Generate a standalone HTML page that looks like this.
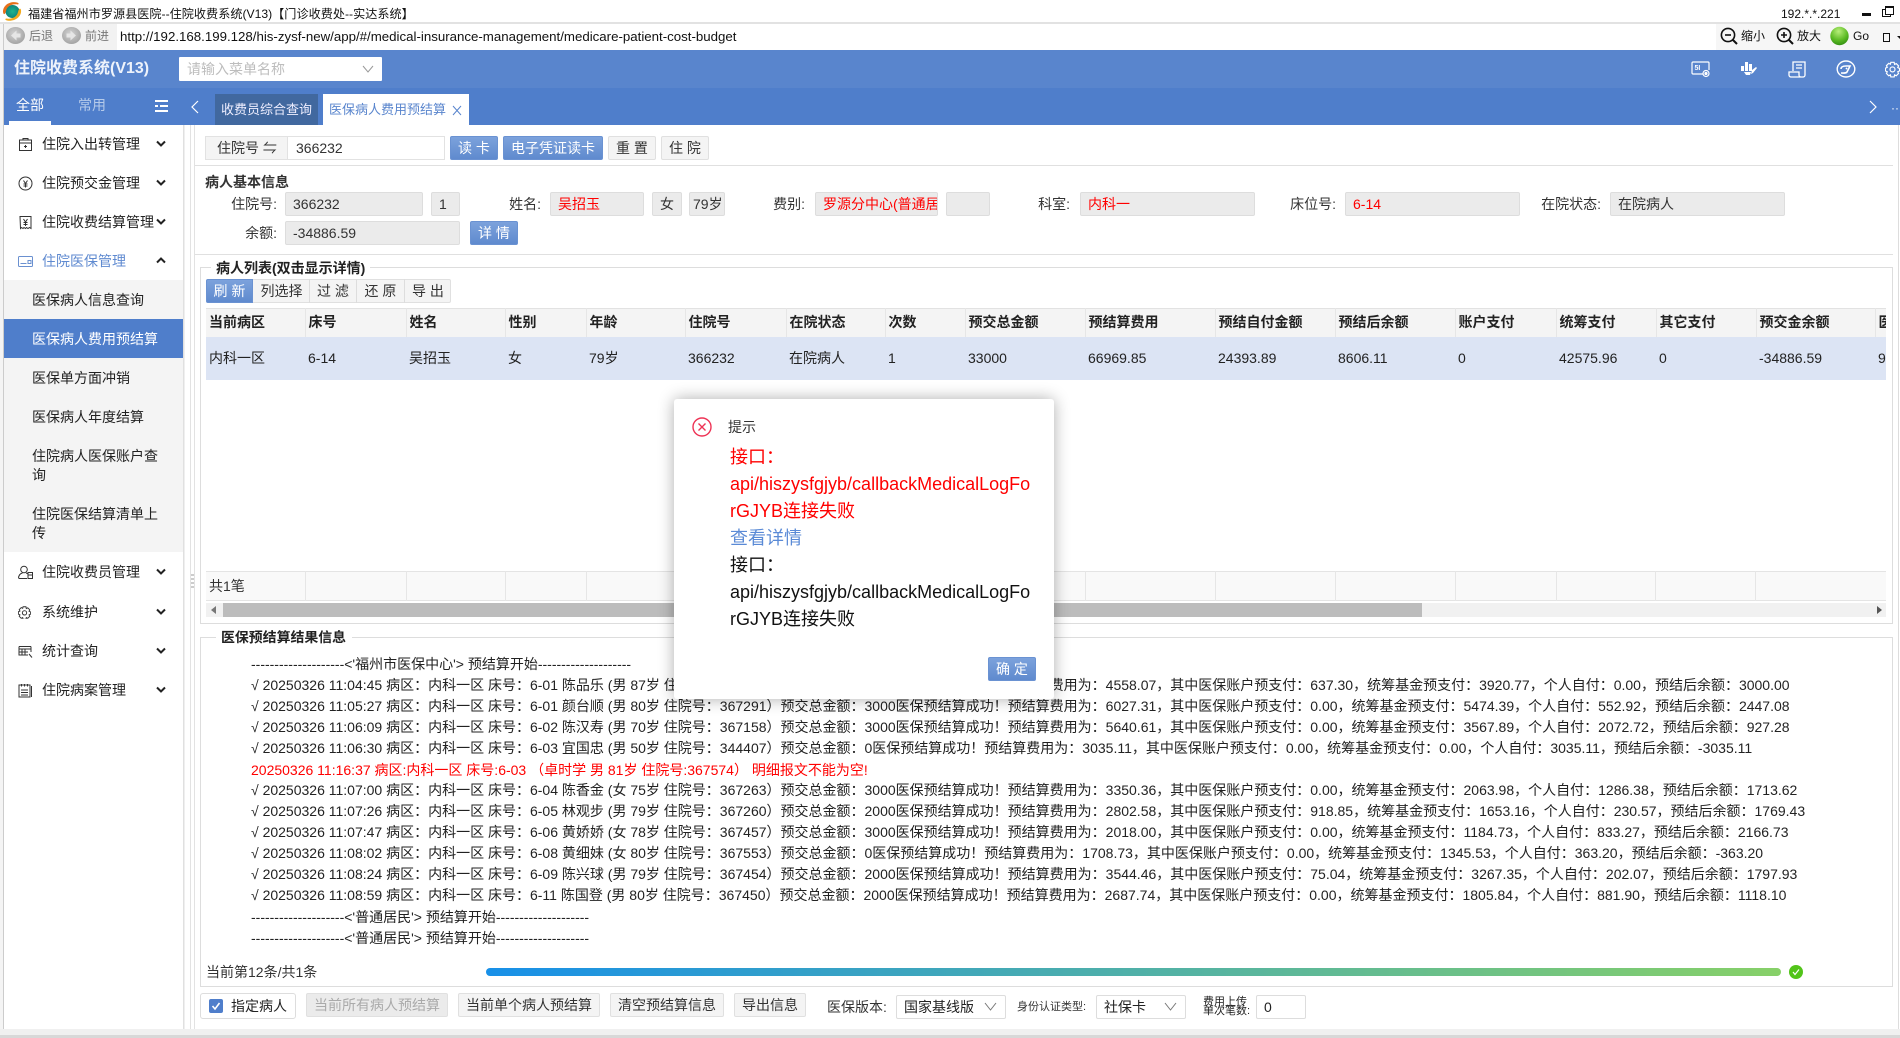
<!DOCTYPE html>
<html lang="zh-CN">
<head>
<meta charset="utf-8">
<title>住院收费系统</title>
<style>
html,body{margin:0;padding:0;width:1900px;height:1038px;overflow:hidden;background:#fff}
body{position:relative;font-family:"Liberation Sans","Noto Sans CJK SC",sans-serif;font-size:14px;color:#222}
.a{position:absolute;white-space:nowrap}
.t{position:absolute;white-space:nowrap;line-height:20px;height:20px}
.box{position:absolute;box-sizing:border-box;background:#ebebeb;border:1px solid #ddd;border-radius:2px;line-height:22px;padding-left:7px;white-space:nowrap;overflow:hidden;height:24px;color:#333}
.red{color:#f00}
.lbl{position:absolute;white-space:nowrap;line-height:24px;height:24px;text-align:right;color:#333}
.btn{position:absolute;box-sizing:border-box;height:24px;line-height:22px;text-align:center;border:1px solid #6a92d2;border-radius:2px;background:linear-gradient(#7ca2dc,#5f8ace);color:#fff;white-space:nowrap}
.wbtn{position:absolute;box-sizing:border-box;height:24px;line-height:22px;text-align:center;border:1px solid #e0e0e0;border-radius:2px;background:#f4f4f4;color:#333;white-space:nowrap}
.hl{position:absolute;height:1px;background:#ddd}
.vl{position:absolute;width:1px;background:#ddd}
.mi{position:absolute;left:4px;width:180px;height:39px}
.mi .tx{position:absolute;left:38px;top:9px;line-height:20px;white-space:nowrap}
.mi svg.ic{position:absolute;left:14px;top:12px}
.mi svg.ar{position:absolute;left:152px;top:15px}
.sub{position:absolute;left:32px;line-height:19px;white-space:nowrap;color:#222}
table{border-collapse:collapse;table-layout:fixed}
td,th{padding:0 0 0 3px;text-align:left;white-space:nowrap;overflow:hidden;font-size:14px;color:#222}
th{padding-bottom:2px}
.log{position:absolute;left:251px;white-space:pre;line-height:20px;height:20px;color:#222;font-size:14px}
</style>
</head>
<body>

<!-- title bar -->
<svg class="a" style="left:2px;top:1px" width="20" height="21" viewBox="0 0 20 21">
<defs><radialGradient id="lg" cx=".5" cy=".5" r=".6"><stop offset="0" stop-color="#1fb58f"/><stop offset="1" stop-color="#0c7a78"/></radialGradient></defs>
<ellipse cx="10.500" cy="10.500" rx="7" ry="6.500" fill="url(#lg)"/>
<path d="M1 11C1 4 8 0 15 1.500 17 2 17 3 16 3.500 10 2.500 5 5 4 10 3 14 1.500 14 1 11Z" fill="#e8701a"/>
<path d="M19 9C20 16 12 21 5 19.500 3 19 3 18 4 17.500 10 18.500 15 16 16 11 17 7 18.500 7 19 9Z" fill="#f2a91c"/>
</svg>
<div class="t" style="left:28px;top:4px;font-size:12.15px;color:#111">福建省福州市罗源县医院--住院收费系统(V13)【门诊收费处--实达系统】</div>
<div class="t" style="left:1781px;top:4px;font-size:12px;color:#111">192.*.*.221</div>
<div class="a" style="left:1862px;top:13px;width:9px;height:3px;background:#111"></div>
<div class="a" style="left:1882px;top:9px;width:7px;height:6px;border:1px solid #111;background:#fff"></div>
<div class="a" style="left:1885px;top:6px;width:7px;height:6px;border:1px solid #111;border-top-width:2px;background:#fff"></div>
<div class="hl" style="left:0;top:22px;width:1900px;background:#e2e2e2;height:2px"></div>

<!-- address bar -->
<div class="a" style="left:0;top:24px;width:3px;height:1014px;background:#f4f4f4"></div>
<div class="a" style="left:3px;top:24px;width:1px;height:1005px;background:#ccc"></div>
<div class="a" style="left:4px;top:24px;width:113px;height:26px;background:#f2f2f2"></div>
<svg class="a" style="left:6px;top:27px" width="19" height="17" viewBox="0 0 19 17">
<defs><radialGradient id="gb" cx=".45" cy=".4" r=".65"><stop offset="0" stop-color="#d4d4d4"/><stop offset="1" stop-color="#a0a0a0"/></radialGradient></defs>
<ellipse cx="9.500" cy="8.500" rx="9.500" ry="8.500" fill="url(#gb)"/><path d="M10.500 3.500 5 8.500l5.500 5v-3h4v-4h-4z" fill="#e6e6e6"/></svg>
<div class="t" style="left:29px;top:26px;font-size:12px;color:#777">后退</div>
<svg class="a" style="left:62px;top:27px" width="19" height="17" viewBox="0 0 19 17">
<ellipse cx="9.500" cy="8.500" rx="9.500" ry="8.500" fill="url(#gb)"/><path d="M8.500 3.500l5.500 5-5.500 5v-3h-4v-4h4z" fill="#e6e6e6"/></svg>
<div class="t" style="left:85px;top:26px;font-size:12px;color:#777">前进</div>
<div class="t" style="left:120px;top:27px;font-size:13.28px;color:#111">http://192.168.199.128/his-zysf-new/app/#/medical-insurance-management/medicare-patient-cost-budget</div>
<div class="a" style="left:1716px;top:24px;width:184px;height:26px;background:#f6f6f6"></div>
<svg class="a" style="left:1720px;top:27px" width="18" height="18" viewBox="0 0 18 18" fill="none" stroke="#111" stroke-width="1.6"><circle cx="8" cy="8" r="6.6"/><path d="M5 8h6"/><path d="M13 13l4 4" stroke-width="2"/></svg>
<div class="t" style="left:1741px;top:26px;font-size:12px;color:#111">缩小</div>
<svg class="a" style="left:1776px;top:27px" width="18" height="18" viewBox="0 0 18 18" fill="none" stroke="#111" stroke-width="1.6"><circle cx="8" cy="8" r="6.6"/><path d="M5 8h6M8 5v6"/><path d="M13 13l4 4" stroke-width="2"/></svg>
<div class="t" style="left:1797px;top:26px;font-size:12px;color:#111">放大</div>
<svg class="a" style="left:1830px;top:26px" width="19" height="20" viewBox="0 0 19 20"><defs><radialGradient id="gg" cx=".45" cy=".25" r=".8"><stop offset="0" stop-color="#b8ee7a"/><stop offset=".6" stop-color="#5cbb24"/><stop offset="1" stop-color="#2e8a10"/></radialGradient></defs><circle cx="9.500" cy="10" r="9.200" fill="url(#gg)"/></svg>
<div class="t" style="left:1853px;top:26px;font-size:12px;color:#111">Go</div>
<div class="a" style="left:1883px;top:33px;width:5px;height:7px;border:1px solid #111"></div>
<div class="a" style="left:1897px;top:36px;border:3px solid transparent;border-top:3px solid #111"></div>

<!-- blue header -->
<div class="a" style="left:4px;top:50px;width:1896px;height:38px;background:#5985cd"></div>
<div class="a" style="left:4px;top:88px;width:1896px;height:37px;background:#4f7ecb"></div>
<div class="t" style="left:14px;top:59px;font-size:16px;font-weight:bold;color:#eef3fb">住院收费系统(V13)</div>
<div class="a" style="left:179px;top:57px;width:203px;height:24px;background:#fff;border-radius:1px"></div>
<div class="t" style="left:187px;top:59px;color:#bdbdbd">请输入菜单名称</div>
<svg class="a" style="left:362px;top:65px" width="12" height="8" viewBox="0 0 12 8" fill="none" stroke="#999" stroke-width="1"><path d="M1 1l5 6 5-6"/></svg>

<!-- header icons -->
<svg class="a" style="left:1691px;top:60px" width="20" height="18" viewBox="0 0 20 18" fill="none" stroke="#fff" stroke-width="1.200"><path d="M12 14H2a1 1 0 0 1-1-1V3a1 1 0 0 1 1-1h15a1 1 0 0 1 1 1v7"/><circle cx="15" cy="13.500" r="3"/><circle cx="15" cy="13.500" r="1" fill="#fff"/><text x="3.500" y="10" font-size="7" font-weight="bold" fill="#fff" stroke="none" font-family="Liberation Sans">5I</text></svg>
<svg class="a" style="left:1740px;top:61px" width="17" height="16" viewBox="0 0 17 16" fill="#fff"><rect x="1" y="5" width="3" height="5"/><rect x="5" y="1" width="3" height="9"/><rect x="9" y="3" width="3" height="7"/><path d="M4 11h7l-1 3H6z"/><path d="M12 9l4-3 1 1-4 5-2 1z"/></svg>
<svg class="a" style="left:1788px;top:60px" width="19" height="18" viewBox="0 0 19 18" fill="none" stroke="#fff" stroke-width="1.300"><path d="M5 11V2h12v13a2 2 0 0 1-2 2H3a2 2 0 0 1-2-2v-3h10v3a2 2 0 0 0 2 2"/><path d="M8 5h6M8 8h6" /></svg>
<svg class="a" style="left:1836px;top:60px" width="20" height="18" viewBox="0 0 20 18" fill="none" stroke="#fff" stroke-width="1.400"><ellipse cx="10" cy="9" rx="8.800" ry="8"/><path d="M5 9c0-2 2-3 5-3h4l-3 6c-1 1.500-3 1-6 1M10 8l1 1" stroke-width="1.600"/></svg>
<svg class="a" style="left:1885px;top:60px" width="15" height="18" viewBox="0 0 18 18" fill="none" stroke="#fff" stroke-width="1.400"><path d="M7 1h4l.5 2.500 2-1 2.800 2.800-1 2 2.200 1v3l-2.200 1 1 2-2.800 2.800-2-1-.5 2.400H7l-.5-2.400-2 1-2.800-2.800 1-2-2.200-1V8l2.200-1-1-2 2.800-2.800 2 1z"/><circle cx="9" cy="9.500" r="3"/></svg>

<!-- side tabs -->
<div class="a" style="left:9px;top:121px;width:42px;height:4px;background:#fff"></div>
<div class="t" style="left:16px;top:95px;color:#fff">全部</div>
<div class="t" style="left:78px;top:95px;color:#b6cbea">常用</div>
<svg class="a" style="left:155px;top:100px" width="14" height="13" viewBox="0 0 14 13" fill="#fff"><rect x="0" y="0" width="13" height="2"/><rect x="5" y="5" width="8" height="2"/><rect x="0" y="5" width="3" height="2"/><rect x="0" y="10" width="13" height="2"/></svg>
<svg class="a" style="left:190px;top:100px" width="10" height="14" viewBox="0 0 10 14" fill="none" stroke="#fff" stroke-width="1.200"><path d="M8 1 2 7l6 6"/></svg>
<svg class="a" style="left:1868px;top:100px" width="10" height="14" viewBox="0 0 10 14" fill="none" stroke="#fff" stroke-width="1.200"><path d="M2 1l6 6-6 6"/></svg>
<div class="t" style="left:1891px;top:98px;color:#fff;font-size:12px">··</div>
<div class="a" style="left:215px;top:94px;width:103px;height:31px;background:#41689f;color:#eef;font-size:13px;line-height:32px;text-align:center">收费员综合查询</div>
<div class="a" style="left:323px;top:94px;width:146px;height:31px;background:#fff;color:#5985cd;font-size:13px;line-height:32px;padding-left:6px;box-sizing:border-box">医保病人费用预结算</div>
<svg class="a" style="left:452px;top:105px" width="10" height="11" viewBox="0 0 10 11" fill="none" stroke="#5985cd" stroke-width="1"><path d="M1 1l8 9M9 1l-8 9"/></svg>

<!-- sidebar -->
<div class="a" style="left:183px;top:125px;width:1px;height:904px;background:#e0e0e0"></div>
<div class="a" style="left:184px;top:125px;width:1px;height:904px;background:#efefef"></div>

<div class="mi" style="top:125px">
<svg class="ic" style="top:12px" width="15" height="15" viewBox="0 0 15 15" fill="none" stroke="#333" stroke-width="1"><rect x="1.500" y="3" width="12" height="10.500"/><path d="M1.500 6h12M5 3V1.500h5V3M7.500 8v3M6 9.500h3"/></svg>
<span class="tx">住院入出转管理</span>
<svg class="ar" width="10" height="8" viewBox="0 0 10 8" fill="none" stroke="#222" stroke-width="2"><path d="M1 1.500 5 5.500l4-4"/></svg></div>
<div class="mi" style="top:164px">
<svg class="ic" width="15" height="15" viewBox="0 0 15 15" fill="none" stroke="#333" stroke-width="1"><circle cx="7.500" cy="7.500" r="6.500"/><path d="M5.500 4.500l2 3 2-3M5.500 8h4M5.500 10h4M7.500 8v3.500"/></svg>
<span class="tx">住院预交金管理</span>
<svg class="ar" width="10" height="8" viewBox="0 0 10 8" fill="none" stroke="#222" stroke-width="2"><path d="M1 1.500 5 5.500l4-4"/></svg></div>
<div class="mi" style="top:203px">
<svg class="ic" width="15" height="15" viewBox="0 0 15 15" fill="none" stroke="#333" stroke-width="1"><path d="M2 1.500h11v12l-1.500-1-1.500 1-1.500-1-1 1-1.500-1-1 1-1.500-1-1 1z"/><path d="M5.500 4l2 3 2-3M5.500 7.500h4M5.500 9.500h4M7.500 7.500V11"/></svg>
<span class="tx">住院收费结算管理</span>
<svg class="ar" width="10" height="8" viewBox="0 0 10 8" fill="none" stroke="#222" stroke-width="2"><path d="M1 1.500 5 5.500l4-4"/></svg></div>
<div class="mi" style="top:242px">
<svg class="ic" width="15" height="15" viewBox="0 0 15 15" fill="none" stroke="#6a90d0" stroke-width="1"><rect x=".5" y="2.500" width="14" height="10" rx="1"/><path d="M2.500 9.500h6"/><rect x="10" y="6.500" width="3" height="3"/></svg>
<span class="tx" style="color:#5f8ad0">住院医保管理</span>
<svg class="ar" width="10" height="8" viewBox="0 0 10 8" fill="none" stroke="#222" stroke-width="2"><path d="M1 5.500 5 1.500l4 4"/></svg></div>

<div class="a" style="left:4px;top:280px;width:179px;height:272px;background:#f4f4f4"></div>
<div class="a" style="left:4px;top:319px;width:179px;height:39px;background:#4f7ecb"></div>
<div class="sub" style="top:291px">医保病人信息查询</div>
<div class="sub" style="top:330px;color:#fff">医保病人费用预结算</div>
<div class="sub" style="top:369px">医保单方面冲销</div>
<div class="sub" style="top:408px">医保病人年度结算</div>
<div class="sub" style="top:447px">住院病人医保账户查<br>询</div>
<div class="sub" style="top:505px">住院医保结算清单上<br>传</div>

<div class="mi" style="top:553px">
<svg class="ic" width="15" height="15" viewBox="0 0 15 15" fill="none" stroke="#333" stroke-width="1"><circle cx="6" cy="4.500" r="3.300"/><path d="M.5 13.500c0-3.500 2-5 4-5.500M8 8c1 .3 1.500.6 2 1M1 13.500h8"/><rect x="10" y="7.500" width="4.500" height="6"/><path d="M10 10h4.500"/></svg>
<span class="tx">住院收费员管理</span>
<svg class="ar" width="10" height="8" viewBox="0 0 10 8" fill="none" stroke="#222" stroke-width="2"><path d="M1 1.500 5 5.500l4-4"/></svg></div>
<div class="mi" style="top:593px">
<svg class="ic" style="width:13px;height:13px;top:13px" viewBox="0 0 18 18" fill="none" stroke="#333" stroke-width="1.300"><path d="M7 1h4l.5 2.500 2-1 2.800 2.800-1 2 2.200 1v3l-2.200 1 1 2-2.800 2.800-2-1-.5 2.400H7l-.5-2.400-2 1-2.800-2.800 1-2-2.200-1V8l2.200-1-1-2 2.800-2.800 2 1z"/><circle cx="9" cy="9.500" r="3"/></svg>
<span class="tx">系统维护</span>
<svg class="ar" width="10" height="8" viewBox="0 0 10 8" fill="none" stroke="#222" stroke-width="2"><path d="M1 1.500 5 5.500l4-4"/></svg></div>
<div class="mi" style="top:632px">
<svg class="ic" width="15" height="15" viewBox="0 0 15 15" fill="none" stroke="#333" stroke-width="1"><path d="M1 2.500h12M1 2.500v8.500h9M1 5h12M1 8h9M4 5v6M7 5v6M13 2.500V8"/><path d="M11 10l3 3.500"/></svg>
<span class="tx">统计查询</span>
<svg class="ar" width="10" height="8" viewBox="0 0 10 8" fill="none" stroke="#222" stroke-width="2"><path d="M1 1.500 5 5.500l4-4"/></svg></div>
<div class="mi" style="top:671px">
<svg class="ic" width="15" height="15" viewBox="0 0 15 15" fill="none" stroke="#333" stroke-width="1"><rect x="1" y="2" width="11" height="12"/><path d="M13.500 3v11M3.500 1v2.500M6.500 1v2.500M9.500 1v2.500"/><path d="M3 7h7M3 9.500h7M3 12h7"/></svg>
<span class="tx">住院病案管理</span>
<svg class="ar" width="10" height="8" viewBox="0 0 10 8" fill="none" stroke="#222" stroke-width="2"><path d="M1 1.500 5 5.500l4-4"/></svg></div>

<!-- splitter lines -->
<div class="vl" style="left:190px;top:125px;height:904px;background:#e2e2e2"></div>
<div class="vl" style="left:194px;top:125px;height:904px;background:#e2e2e2"></div>
<div class="a" style="left:191px;top:574px;width:3px;height:16px;background:repeating-linear-gradient(#ccc 0 2px,#fff 2px 4px)"></div>
<div class="vl" style="left:1898px;top:125px;height:904px;background:#ddd"></div>

<!-- toolbar -->
<div class="a" style="left:205px;top:136px;width:83px;height:24px;box-sizing:border-box;background:#f4f4f4;border:1px solid #e2e2e2;line-height:22px;padding-left:11px;color:#333">住院号 ⇋</div>
<div class="a" style="left:287px;top:136px;width:158px;height:24px;box-sizing:border-box;background:#fff;border:1px solid #e2e2e2;line-height:22px;padding-left:8px;color:#333">366232</div>
<div class="btn" style="left:450px;top:136px;width:48px">读 卡</div>
<div class="btn" style="left:503px;top:136px;width:100px">电子凭证读卡</div>
<div class="wbtn" style="left:608px;top:136px;width:48px">重 置</div>
<div class="wbtn" style="left:661px;top:136px;width:48px">住 院</div>
<div class="hl" style="left:195px;top:165px;width:1698px;background:#e0e0e0"></div>

<!-- patient info -->
<div class="t" style="left:205px;top:172px;font-weight:bold;font-size:14px;color:#333">病人基本信息</div>
<div class="lbl" style="left:230px;top:192px;width:47px">住院号:</div>
<div class="box" style="left:285px;top:192px;width:138px">366232</div>
<div class="box" style="left:431px;top:192px;width:29px">1</div>
<div class="lbl" style="left:506px;top:192px;width:35px">姓名:</div>
<div class="box red" style="left:550px;top:192px;width:94px">吴招玉</div>
<div class="box" style="left:652px;top:192px;width:30px">女</div>
<div class="box" style="left:689px;top:192px;width:36px;padding-left:3px">79岁</div>
<div class="lbl" style="left:770px;top:192px;width:35px">费别:</div>
<div class="box red" style="left:815px;top:192px;width:123px">罗源分中心(普通居民)</div>
<div class="box" style="left:946px;top:192px;width:44px"></div>
<div class="lbl" style="left:1035px;top:192px;width:35px">科室:</div>
<div class="box red" style="left:1080px;top:192px;width:175px">内科一</div>
<div class="lbl" style="left:1288px;top:192px;width:48px">床位号:</div>
<div class="box red" style="left:1345px;top:192px;width:175px">6-14</div>
<div class="lbl" style="left:1538px;top:192px;width:63px">在院状态:</div>
<div class="box" style="left:1610px;top:192px;width:175px">在院病人</div>
<div class="lbl" style="left:243px;top:221px;width:34px">余额:</div>
<div class="box" style="left:285px;top:221px;width:175px">-34886.59</div>
<div class="btn" style="left:470px;top:221px;width:48px">详 情</div>
<div class="hl" style="left:195px;top:254px;width:1698px;background:#e0e0e0"></div>

<!-- patient list fieldset -->
<div class="a" style="left:200px;top:267px;width:1693px;height:357px;box-sizing:border-box;border:1px solid #ddd"></div>
<div class="a" style="left:211px;top:258px;width:159px;height:18px;background:#fff"></div>
<div class="t" style="left:216px;top:258px;font-weight:bold;font-size:14px;color:#222">病人列表(双击显示详情)</div>
<div class="a" style="left:206px;top:279px;width:245px;height:24px;box-sizing:border-box;background:#f4f4f4;border:1px solid #e0e0e0;border-radius:2px"></div>
<div class="btn" style="left:206px;top:279px;width:47px;border-radius:2px 0 0 2px">刷 新</div>
<div class="a" style="left:254px;top:279px;width:56px;line-height:24px;text-align:center;color:#333;border-right:1px solid #ddd;box-sizing:border-box">列选择</div>
<div class="a" style="left:310px;top:279px;width:47px;line-height:24px;text-align:center;color:#333;border-right:1px solid #ddd;box-sizing:border-box">过 滤</div>
<div class="a" style="left:357px;top:279px;width:48px;line-height:24px;text-align:center;color:#333;border-right:1px solid #ddd;box-sizing:border-box">还 原</div>
<div class="a" style="left:405px;top:279px;width:46px;line-height:24px;text-align:center;color:#333">导 出</div>

<table class="a" style="left:206px;top:308px;width:1680px;border-top:1px solid #e2e2e2">
<colgroup><col style="width:99px"><col style="width:101px"><col style="width:99px"><col style="width:81px"><col style="width:99px"><col style="width:101px"><col style="width:99px"><col style="width:80px"><col style="width:120px"><col style="width:130px"><col style="width:120px"><col style="width:120px"><col style="width:101px"><col style="width:100px"><col style="width:100px"><col style="width:119px"><col style="width:11px"></colgroup>
<tr style="height:28px;background:#f4f4f4">
<th style="border-right:1px solid #e6e6e6">当前病区</th><th style="border-right:1px solid #e6e6e6">床号</th><th style="border-right:1px solid #e6e6e6">姓名</th><th style="border-right:1px solid #e6e6e6">性别</th><th style="border-right:1px solid #e6e6e6">年龄</th><th style="border-right:1px solid #e6e6e6">住院号</th><th style="border-right:1px solid #e6e6e6">在院状态</th><th style="border-right:1px solid #e6e6e6">次数</th><th style="border-right:1px solid #e6e6e6">预交总金额</th><th style="border-right:1px solid #e6e6e6">预结算费用</th><th style="border-right:1px solid #e6e6e6">预结自付金额</th><th style="border-right:1px solid #e6e6e6">预结后余额</th><th style="border-right:1px solid #e6e6e6">账户支付</th><th style="border-right:1px solid #e6e6e6">统筹支付</th><th style="border-right:1px solid #e6e6e6">其它支付</th><th style="border-right:1px solid #e6e6e6">预交金余额</th><th>医</th></tr>
<tr style="height:43px;background:#dce4f4">
<td>内科一区</td><td>6-14</td><td>吴招玉</td><td>女</td><td>79岁</td><td>366232</td><td>在院病人</td><td>1</td><td>33000</td><td>66969.85</td><td>24393.89</td><td>8606.11</td><td>0</td><td>42575.96</td><td>0</td><td>-34886.59</td><td>9</td></tr>
</table>

<!-- table footer -->
<div class="a" style="left:206px;top:571px;width:1680px;height:30px;background:#f9f9f9;border-top:1px solid #e4e4e4;border-bottom:1px solid #e4e4e4;box-sizing:border-box"></div>
<div class="t" style="left:209px;top:576px;color:#333">共1笔</div>
<div class="vl" style="left:305px;top:571px;height:30px;background:#e6e6e6"></div>
<div class="vl" style="left:406px;top:571px;height:30px;background:#e6e6e6"></div>
<div class="vl" style="left:505px;top:571px;height:30px;background:#e6e6e6"></div>
<div class="vl" style="left:586px;top:571px;height:30px;background:#e6e6e6"></div>
<div class="vl" style="left:1085px;top:571px;height:30px;background:#e6e6e6"></div>
<div class="vl" style="left:1215px;top:571px;height:30px;background:#e6e6e6"></div>
<div class="vl" style="left:1335px;top:571px;height:30px;background:#e6e6e6"></div>
<div class="vl" style="left:1455px;top:571px;height:30px;background:#e6e6e6"></div>
<div class="vl" style="left:1556px;top:571px;height:30px;background:#e6e6e6"></div>
<div class="vl" style="left:1655px;top:571px;height:30px;background:#e6e6e6"></div>
<div class="vl" style="left:1755px;top:571px;height:30px;background:#e6e6e6"></div>
<div class="a" style="left:206px;top:603px;width:1680px;height:14px;background:#f1f1f1"></div>
<div class="a" style="left:223px;top:603px;width:1199px;height:14px;background:#bcbcbc"></div>
<div class="a" style="left:211px;top:606px;border:4px solid transparent;border-right:5px solid #777;border-left:0"></div>
<div class="a" style="left:1877px;top:606px;border:4px solid transparent;border-left:5px solid #555;border-right:0"></div>

<!-- result fieldset -->
<div class="a" style="left:200px;top:637px;width:1693px;height:350px;box-sizing:border-box;border:1px solid #ddd"></div>
<div class="a" style="left:216px;top:628px;width:136px;height:18px;background:#fff"></div>
<div class="t" style="left:221px;top:627px;font-weight:bold;font-size:13.9px;color:#222">医保预结算结果信息</div>

<div class="log" style="top:654px">--------------------&lt;'福州市医保中心'&gt; 预结算开始--------------------</div>
<div class="log" style="top:675px">√ 20250326 11:04:45 病区：内科一区 床号：6-01 陈品乐 (男 87岁 住院号：367296）预交总金额：3000医保预结算成功！预结算费用为：4558.07，其中医保账户预支付：637.30，统筹基金预支付：3920.77，个人自付：0.00，预结后余额：3000.00</div>
<div class="log" style="top:696px">√ 20250326 11:05:27 病区：内科一区 床号：6-01 颜台顺 (男 80岁 住院号：367291）预交总金额：3000医保预结算成功！预结算费用为：6027.31，其中医保账户预支付：0.00，统筹基金预支付：5474.39，个人自付：552.92，预结后余额：2447.08</div>
<div class="log" style="top:717px">√ 20250326 11:06:09 病区：内科一区 床号：6-02 陈汉寿 (男 70岁 住院号：367158）预交总金额：3000医保预结算成功！预结算费用为：5640.61，其中医保账户预支付：0.00，统筹基金预支付：3567.89，个人自付：2072.72，预结后余额：927.28</div>
<div class="log" style="top:738px">√ 20250326 11:06:30 病区：内科一区 床号：6-03 宜国忠 (男 50岁 住院号：344407）预交总金额：0医保预结算成功！预结算费用为：3035.11，其中医保账户预支付：0.00，统筹基金预支付：0.00，个人自付：3035.11，预结后余额：-3035.11</div>
<div class="log" style="top:760px;color:#f00">20250326 11:16:37 病区:内科一区 床号:6-03 （卓时学 男 81岁 住院号:367574） 明细报文不能为空!</div>
<div class="log" style="top:780px">√ 20250326 11:07:00 病区：内科一区 床号：6-04 陈香金 (女 75岁 住院号：367263）预交总金额：3000医保预结算成功！预结算费用为：3350.36，其中医保账户预支付：0.00，统筹基金预支付：2063.98，个人自付：1286.38，预结后余额：1713.62</div>
<div class="log" style="top:801px">√ 20250326 11:07:26 病区：内科一区 床号：6-05 林观步 (男 79岁 住院号：367260）预交总金额：2000医保预结算成功！预结算费用为：2802.58，其中医保账户预支付：918.85，统筹基金预支付：1653.16，个人自付：230.57，预结后余额：1769.43</div>
<div class="log" style="top:822px">√ 20250326 11:07:47 病区：内科一区 床号：6-06 黄娇娇 (女 78岁 住院号：367457）预交总金额：3000医保预结算成功！预结算费用为：2018.00，其中医保账户预支付：0.00，统筹基金预支付：1184.73，个人自付：833.27，预结后余额：2166.73</div>
<div class="log" style="top:843px">√ 20250326 11:08:02 病区：内科一区 床号：6-08 黄细妹 (女 80岁 住院号：367553）预交总金额：0医保预结算成功！预结算费用为：1708.73，其中医保账户预支付：0.00，统筹基金预支付：1345.53，个人自付：363.20，预结后余额：-363.20</div>
<div class="log" style="top:864px">√ 20250326 11:08:24 病区：内科一区 床号：6-09 陈兴球 (男 79岁 住院号：367454）预交总金额：2000医保预结算成功！预结算费用为：3544.46，其中医保账户预支付：75.04，统筹基金预支付：3267.35，个人自付：202.07，预结后余额：1797.93</div>
<div class="log" style="top:885px">√ 20250326 11:08:59 病区：内科一区 床号：6-11 陈国登 (男 80岁 住院号：367450）预交总金额：2000医保预结算成功！预结算费用为：2687.74，其中医保账户预支付：0.00，统筹基金预支付：1805.84，个人自付：881.90，预结后余额：1118.10</div>
<div class="log" style="top:907px">--------------------&lt;'普通居民'&gt; 预结算开始--------------------</div>
<div class="log" style="top:928px">--------------------&lt;'普通居民'&gt; 预结算开始--------------------</div>

<!-- progress -->
<div class="t" style="left:206px;top:962px;color:#333">当前第12条/共1条</div>
<div class="a" style="left:486px;top:968px;width:1295px;height:8px;border-radius:4px;background:linear-gradient(90deg,#1890e8,#87d068)"></div>
<svg class="a" style="left:1789px;top:965px" width="14" height="14" viewBox="0 0 14 14"><circle cx="7" cy="7" r="7" fill="#52c41a"/><path d="M4 7l2 2.500L10 4.500" fill="none" stroke="#fff" stroke-width="1.200"/></svg>

<!-- bottom controls -->
<div class="a" style="left:200px;top:993px;width:96px;height:26px;box-sizing:border-box;border:1px solid #ddd;border-radius:3px;background:#fff"></div>
<svg class="a" style="left:209px;top:999px" width="14" height="14" viewBox="0 0 14 14"><rect width="14" height="14" rx="2" fill="#4f7ecb"/><path d="M3.500 7l2.500 3 4.500-6" fill="none" stroke="#fff" stroke-width="1.600"/></svg>
<div class="t" style="left:231px;top:996px;color:#222">指定病人</div>
<div class="wbtn" style="left:306px;top:993px;width:142px;color:#aaa;background:#ebebeb">当前所有病人预结算</div>
<div class="wbtn" style="left:458px;top:993px;width:142px">当前单个病人预结算</div>
<div class="wbtn" style="left:610px;top:993px;width:114px">清空预结算信息</div>
<div class="wbtn" style="left:734px;top:993px;width:72px">导出信息</div>
<div class="t" style="left:827px;top:997px;color:#333">医保版本:</div>
<div class="a" style="left:896px;top:995px;width:110px;height:24px;box-sizing:border-box;border:1px solid #ddd;border-radius:2px;line-height:23px;padding-left:7px;color:#222">国家基线版</div>
<svg class="a" style="left:984px;top:1002px" width="13" height="9" viewBox="0 0 13 9" fill="none" stroke="#777" stroke-width="1"><path d="M1 1l5.500 7L12 1"/></svg>
<div class="t" style="left:1017px;top:997px;font-size:11px;color:#333">身份认证类型:</div>
<div class="a" style="left:1096px;top:995px;width:90px;height:24px;box-sizing:border-box;border:1px solid #ddd;border-radius:2px;line-height:23px;padding-left:7px;color:#222">社保卡</div>
<svg class="a" style="left:1164px;top:1002px" width="13" height="9" viewBox="0 0 13 9" fill="none" stroke="#777" stroke-width="1"><path d="M1 1l5.500 7L12 1"/></svg>
<div class="a" style="left:1203px;top:998px;font-size:11px;line-height:9px;color:#222;white-space:nowrap">费用上传<br>单次笔数:</div>
<div class="a" style="left:1256px;top:995px;width:50px;height:24px;box-sizing:border-box;border:1px solid #ddd;border-radius:2px;line-height:23px;padding-left:7px;color:#222">0</div>

<!-- bottom strip -->
<div class="a" style="left:0;top:1029px;width:1900px;height:6px;background:#f0f0f0"></div>
<div class="a" style="left:0;top:1035px;width:1900px;height:3px;background:#d8d8d8"></div>

<!-- modal -->
<div class="a" style="left:674px;top:399px;width:380px;height:300px;background:#fff;border-radius:3px;box-shadow:0 0 16px rgba(0,0,0,.32)"></div>
<svg class="a" style="left:692px;top:417px" width="20" height="20" viewBox="0 0 20 20" fill="none" stroke="#ee3355" stroke-width="1.400"><circle cx="10" cy="10" r="9"/><path d="M6.500 6.500l7 7M13.500 6.500l-7 7"/></svg>
<div class="t" style="left:728px;top:417px;color:#333">提示</div>
<div class="a" style="left:730px;top:444px;width:310px;font-size:18px;line-height:27px;white-space:nowrap;color:#f00">
<div>接口：</div><div>api/hiszysfgjyb/callbackMedicalLogFo<br>rGJYB连接失败</div>
<div style="color:#5a8ad6">查看详情</div>
<div style="color:#111">接口：</div><div style="color:#111">api/hiszysfgjyb/callbackMedicalLogFo<br>rGJYB连接失败</div>
</div>
<div class="btn" style="left:988px;top:657px;width:48px">确 定</div>

</body>
</html>
